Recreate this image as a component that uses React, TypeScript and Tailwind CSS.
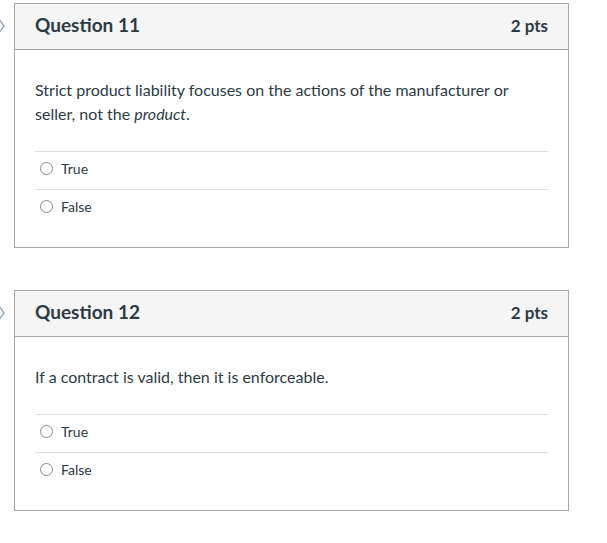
import React from 'react';

type Question = {
  title: string;
  points: string;
  prompt: React.ReactNode;
  answers: string[];
};

const QUESTIONS: Question[] = [
  {
    title: 'Question 11',
    points: '2 pts',
    prompt: (
      <>
        Strict product liability focuses on the actions of the manufacturer or seller, not the{' '}
        <em>product</em>.
      </>
    ),
    answers: ['True', 'False'],
  },
  {
    title: 'Question 12',
    points: '2 pts',
    prompt: 'If a contract is valid, then it is enforceable.',
    answers: ['True', 'False'],
  },
];

function Chevron() {
  return (
    <svg width="14" height="20" viewBox="0 0 14 20" className="block">
      <path d="M-1 1 L4 8 L-1 15" fill="none" stroke="#8ea3bb" strokeWidth="1.3" />
    </svg>
  );
}

function QuestionCard({ q }: { q: Question }) {
  return (
    <div className="flex">
      <div className="w-[14px] shrink-0 pt-[15px]">
        <Chevron />
      </div>
      <div className="w-[555px] border border-[#a8a8a8] bg-white">
        <div className="flex h-[46px] items-center justify-between border-b border-[#a8a8a8] bg-[#f5f5f5] px-5 pb-[2px]">
          <h2 className="text-[19px] font-bold text-[#2d3b45]">{q.title}</h2>
          <span className="text-[17px] font-bold text-[#2d3b45]">{q.points}</span>
        </div>
        <div className="px-5 pt-7 pb-5">
          <p className="pr-[30px] text-[16px] leading-6 text-[#2d3b45]">{q.prompt}</p>
          <div className="mt-[25px]">
            {q.answers.map((a) => (
              <label
                key={a}
                className="flex h-[38px] items-center border-t border-[#dddddd] pb-[5px] pl-[5px] text-[14px] text-[#2d3b45]"
              >
                <span className="h-[13px] w-[13px] shrink-0 rounded-full border border-[#8a8a8a] bg-white" />
                <span className="ml-[8px]">{a}</span>
              </label>
            ))}
          </div>
        </div>
      </div>
    </div>
  );
}

export default function App() {
  return (
    <div
      className="min-h-[543px] w-[607px] bg-white pt-[3px]"
      style={{ fontFamily: 'Lato, "Liberation Sans", sans-serif' }}
    >
      <div className="flex flex-col gap-[42px]">
        {QUESTIONS.map((q) => (
          <QuestionCard key={q.title} q={q} />
        ))}
      </div>
    </div>
  );
}
